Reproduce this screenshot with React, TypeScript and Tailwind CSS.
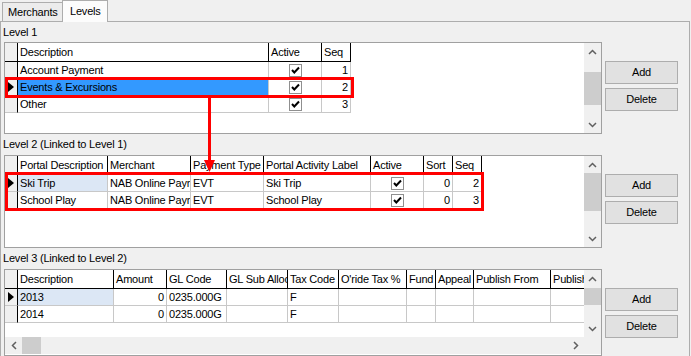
import React from "react";

type Col = { h: string; w: string; align?: "right"; check?: boolean };

const Chevron = ({ dir }: { dir: "up" | "down" | "left" | "right" }) => {
  if (dir === "up" || dir === "down") {
    return (
      <svg width="9" height="6" viewBox="0 0 9 6">
        <path
          d={dir === "up" ? "M1 5 L4.5 1.5 L8 5" : "M1 1 L4.5 4.5 L8 1"}
          stroke="#606060"
          strokeWidth="1.5"
          fill="none"
        />
      </svg>
    );
  }
  return (
    <svg width="6" height="9" viewBox="0 0 6 9">
      <path
        d={dir === "left" ? "M5 1 L1.5 4.5 L5 8" : "M1 1 L4.5 4.5 L1 8"}
        stroke="#606060"
        strokeWidth="1.5"
        fill="none"
      />
    </svg>
  );
};

const CheckBox = () => (
  <div className="w-[13px] h-[13px] border border-[#8f8f8f] bg-white flex items-center justify-center">
    <svg width="11" height="11" viewBox="0 0 11 11">
      <path d="M2 5 L4.3 7.5 L9 2.5" stroke="#000" strokeWidth="2" fill="none" />
    </svg>
  </div>
);

const Arrow = () => (
  <svg width="6" height="10" viewBox="0 0 6 10">
    <path d="M0 0 L6 5 L0 10 Z" fill="#000" />
  </svg>
);

const Btn = ({ children }: { children: React.ReactNode }) => (
  <div className="w-[73px] h-[23px] border border-[#adadad] bg-[#e1e1e1] flex items-center justify-center">
    {children}
  </div>
);

const ButtonCol = () => (
  <div className="flex flex-col gap-[4px] mt-[19px]">
    <Btn>Add</Btn>
    <Btn>Delete</Btn>
  </div>
);

const VScroll = ({ thumbTop, thumbH }: { thumbTop: string; thumbH: string }) => (
  <div className="w-[17px] shrink-0 bg-[#f0f0f0] flex flex-col">
    <div className="h-[17px] flex items-center justify-center">
      <Chevron dir="up" />
    </div>
    <div className="flex-1 flex flex-col">
      <div className={`${thumbTop} ${thumbH} bg-[#cdcdcd]`} />
    </div>
    <div className="h-[17px] flex items-center justify-center">
      <Chevron dir="down" />
    </div>
  </div>
);

type Cell = string | boolean;

function Table({
  cols,
  rows,
  current,
  currentBg,
}: {
  cols: Col[];
  rows: Cell[][];
  current: number;
  currentBg: string;
}) {
  return (
    <div className="flex-1 min-w-0 overflow-hidden bg-white">
      <div className="flex h-[19px]">
        <div className="w-[13px] shrink-0 bg-[#f0f0f0] border-r border-b border-black" />
        {cols.map((c, i) => (
          <div
            key={i}
            className={`${c.w} shrink-0 border-r border-b border-black px-[2px] flex items-center whitespace-nowrap overflow-hidden bg-white`}
          >
            {c.h}
          </div>
        ))}
      </div>
      {rows.map((r, ri) => (
        <div key={ri} className="flex h-[17px]">
          <div className="w-[13px] shrink-0 bg-[#f0f0f0] border-r border-b border-r-black border-b-[#c8c8c8] flex items-center pl-[3px]">
            {ri === current ? <Arrow /> : null}
          </div>
          {cols.map((c, ci) => {
            const v = r[ci];
            const bg = ri === current && ci === 0 ? currentBg : "bg-white";
            return (
              <div
                key={ci}
                className={`${c.w} ${bg} shrink-0 border-r border-b border-[#c8c8c8] px-[2px] flex items-center whitespace-nowrap overflow-hidden ${
                  c.check ? "justify-center" : c.align === "right" ? "justify-end" : ""
                }`}
              >
                {c.check ? (v ? <CheckBox /> : null) : (v as string)}
              </div>
            );
          })}
        </div>
      ))}
    </div>
  );
}

const l1Cols: Col[] = [
  { h: "Description", w: "w-[251px]" },
  { h: "Active", w: "w-[53px]", check: true },
  { h: "Seq", w: "w-[29px]", align: "right" },
];
const l1Rows: Cell[][] = [
  ["Account Payment", true, "1"],
  ["Events & Excursions", true, "2"],
  ["Other", true, "3"],
];

const l2Cols: Col[] = [
  { h: "Portal Description", w: "w-[90px]" },
  { h: "Merchant", w: "w-[83px]" },
  { h: "Payment Type", w: "w-[73px]" },
  { h: "Portal Activity Label", w: "w-[107px]" },
  { h: "Active", w: "w-[53px]", check: true },
  { h: "Sort", w: "w-[29px]", align: "right" },
  { h: "Seq", w: "w-[29px]", align: "right" },
];
const l2Rows: Cell[][] = [
  ["Ski Trip", "NAB Online Payments", "EVT", "Ski Trip", true, "0", "2"],
  ["School Play", "NAB Online Payments", "EVT", "School Play", true, "0", "3"],
];

const l3Cols: Col[] = [
  { h: "Description", w: "w-[96px]" },
  { h: "Amount", w: "w-[53px]", align: "right" },
  { h: "GL Code", w: "w-[60px]" },
  { h: "GL Sub Alloc", w: "w-[61px]" },
  { h: "Tax Code", w: "w-[51px]" },
  { h: "O'ride Tax %", w: "w-[68px]" },
  { h: "Fund", w: "w-[29px]" },
  { h: "Appeal", w: "w-[38px]" },
  { h: "Publish From", w: "w-[77px]" },
  { h: "Publish To", w: "w-[80px]" },
];
const l3Rows: Cell[][] = [
  ["2013", "0", "0235.000G", "", "F", "", "", "", "", ""],
  ["2014", "0", "0235.000G", "", "F", "", "", "", "", ""],
];

export default function App() {
  return (
    <div className="relative w-[691px] h-[356px] overflow-hidden bg-[#f0f0f0] text-black text-[11px] tracking-[-0.2px] leading-none font-['Liberation_Sans',Arial,sans-serif]">
      {/* Tabs */}
      <div className="flex items-end h-[21px] pl-[2px]">
        <div className="h-[19px] w-[61px] border border-b-0 border-[#adadad] bg-[#ececec] pl-[5px] flex items-center">
          Merchants
        </div>
        <div className="relative z-10 h-[22px] -mb-px -ml-px w-[46px] border border-b-0 border-[#adadad] bg-[#fcfcfc] pl-[7px] flex items-center pb-[1px]">
          Levels
        </div>
      </div>

      {/* Panel */}
      <div className="h-[335px] border border-b-0 border-[#adadad] w-[690px] flex flex-col">
        <div className="h-[20px] flex items-center pl-[2px]">Level 1</div>
        <div className="flex pl-[3px] gap-[3px]">
          <div className="w-[598px] h-[92px] border border-[#a0a0a0] bg-white flex">
            <Table cols={l1Cols} rows={l1Rows} current={1} currentBg="bg-[#3399ff]" />
            <VScroll thumbTop="mt-[12px]" thumbH="h-[33px]" />
          </div>
          <ButtonCol />
        </div>

        <div className="h-[21px] flex items-center pl-[2px]">Level 2 (Linked to Level 1)</div>
        <div className="flex pl-[3px] gap-[3px]">
          <div className="w-[598px] h-[93px] border border-[#a0a0a0] bg-white flex">
            <Table cols={l2Cols} rows={l2Rows} current={0} currentBg="bg-[#dce7f5]" />
            <VScroll thumbTop="mt-[0px]" thumbH="h-[38px]" />
          </div>
          <ButtonCol />
        </div>

        <div className="h-[21px] flex items-center pl-[2px]">Level 3 (Linked to Level 2)</div>
        <div className="flex pl-[3px] gap-[3px]">
          <div className="w-[598px] h-[87px] border border-[#a0a0a0] bg-white flex flex-col">
            <div className="flex flex-1 min-h-0">
              <Table cols={l3Cols} rows={l3Rows} current={0} currentBg="bg-[#dce7f5]" />
              <VScroll thumbTop="mt-[1px]" thumbH="h-[17px]" />
            </div>
            <div className="h-[17px] flex bg-[#f0f0f0] mb-[1px]">
              <div className="w-[17px] flex items-center justify-center">
                <Chevron dir="left" />
              </div>
              <div className="flex-1 flex">
                <div className="w-[19px] bg-[#cdcdcd]" />
              </div>
              <div className="w-[17px] flex items-center justify-center">
                <Chevron dir="right" />
              </div>
              <div className="w-[17px]" />
            </div>
          </div>
          <ButtonCol />
        </div>
      </div>

      {/* Annotations */}
      <div className="absolute left-[5px] top-[77px] w-[349px] h-[21px] border-[3px] border-[#ff0000]" />
      <div className="absolute left-[208px] top-[97px] w-[3px] h-[64px] bg-[#ff0000]" />
      <svg className="absolute left-[204px] top-[160px]" width="11" height="12" viewBox="0 0 11 12">
        <path d="M0 0 L11 0 L5.5 12 Z" fill="#ff0000" />
      </svg>
      <div className="absolute left-[5px] top-[172px] w-[479px] h-[39px] border-[3px] border-[#ff0000]" />
    </div>
  );
}
